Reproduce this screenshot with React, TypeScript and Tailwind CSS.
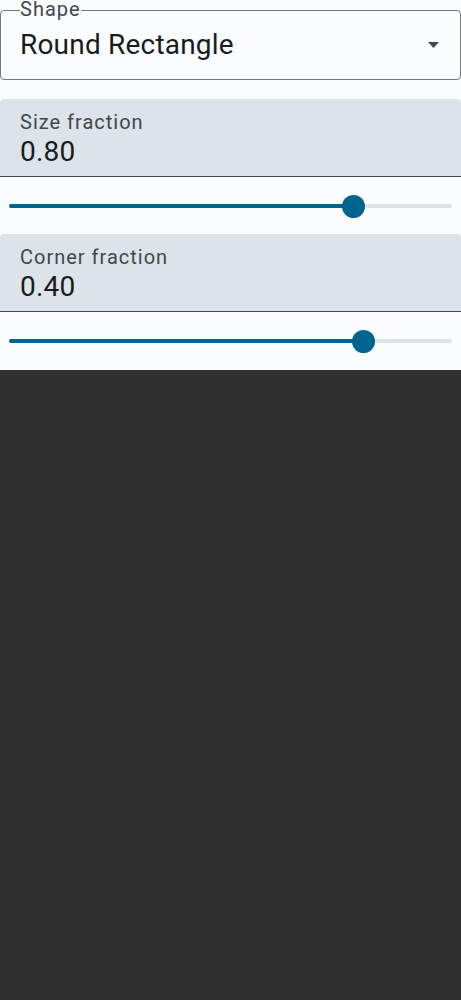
import { useState } from 'react';

interface SliderFieldProps {
  label: string;
  value: number;
  min: number;
  max: number;
}

function SliderField({ label, value, min, max }: SliderFieldProps) {
  const pct = ((value - min) / (max - min)) * 100;
  return (
    <div>
      <div className="h-[78px] bg-[#dce3e9] rounded-t-[4px] border-b border-[#41484d] px-[20px] pt-[11px]">
        <div className="text-[20px] leading-[24px] tracking-[1px] text-[#41484d]">{label}</div>
        <div className="text-[28px] leading-[32px] tracking-[0.2px] text-[#191c1e] mt-[2px]">{value.toFixed(2)}</div>
      </div>
      <div className="h-[57px] px-[9px] pt-[27px]">
        <div className="relative h-[4px]">
          <div className="absolute inset-0 rounded-full bg-[#dce3e9]" />
          <div className="absolute left-0 top-0 h-[4px] rounded-full bg-[#00658e]" style={{ width: `${pct}%` }} />
          <div
            className="absolute top-[-9.5px] w-[23px] h-[23px] -ml-[11.5px] rounded-full bg-[#00658e]"
            style={{ left: `${pct}%` }}
          />
        </div>
      </div>
    </div>
  );
}

export default function App() {
  const [shape] = useState('Round Rectangle');

  return (
    <div className="min-h-screen bg-[#303030] font-['Roboto',sans-serif]">
      <div className="bg-[#fafcfe] pt-[10px] pb-[1px]">
        <div className="relative h-[70px] border border-[#71787e] rounded-[4px] flex items-center pl-[19px] pr-[21px]">
          <span className="absolute top-[-11px] left-[19px] text-[20px] leading-[18px] tracking-[1px] text-[#41484d] bg-[#fafcfe]">
            Shape
          </span>
          <span className="flex-1 text-[28px] leading-[32px] tracking-[0.2px] text-[#191c1e]">{shape}</span>
          <svg width="11" height="6" viewBox="0 0 11 6" className="mt-[-1px]">
            <path d="M0 0 L11 0 L5.5 6 Z" fill="#41484d" />
          </svg>
        </div>
        <div className="h-[19px]" />
        <SliderField label="Size fraction" value={0.8} min={0.1} max={1} />
        <SliderField label="Corner fraction" value={0.4} min={0} max={0.5} />
      </div>
    </div>
  );
}
